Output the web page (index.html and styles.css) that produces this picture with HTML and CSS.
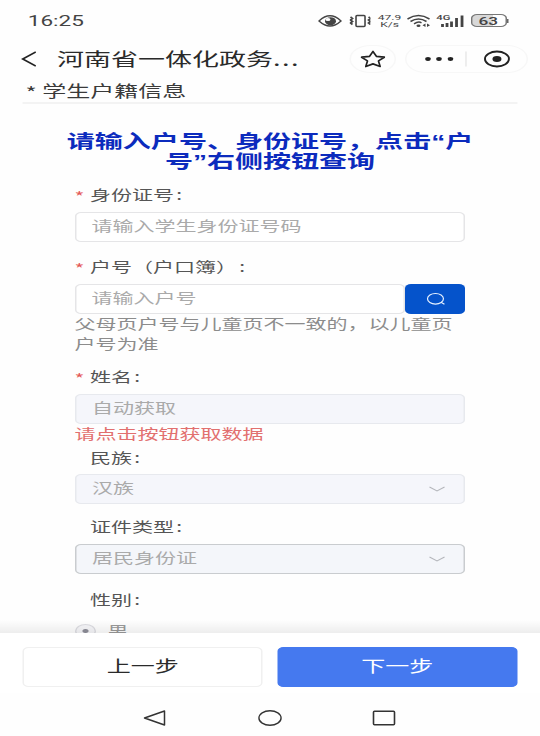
FILE: index.html
```html
<!DOCTYPE html>
<html lang="zh-CN">
<head>
<meta charset="utf-8">
<title>学生户籍信息</title>
<link rel="stylesheet" href="styles.css">
</head>
<body>
<div class="screen">
  <header class="status">
    <span class="clock">16:25</span>
    <svg class="i-eye" viewBox="0 0 24 14" preserveAspectRatio="none"><path d="M1 7Q12-3.500 23 7Q12 17 1 7Z" fill="none" stroke="#444" stroke-width="1.400"/><ellipse cx="12.500" cy="7.200" rx="5.500" ry="4" fill="#444"/><ellipse cx="10" cy="5.500" rx="2.500" ry="1.500" fill="#fff"/></svg>
    <svg class="i-vib" viewBox="0 0 22 14" preserveAspectRatio="none"><rect x="6.500" y="1.500" width="9" height="11" rx="1" fill="none" stroke="#444" stroke-width="1.600"/><path d="M1 3l2 1.500-2 1.500 2 1.500-2 1.500 2 1.500M19 3l2 1.500-2 1.500 2 1.500-2 1.500 2 1.500" fill="none" stroke="#444" stroke-width="1.700"/></svg>
    <span class="speed"><span>47.9</span><span>K/s</span></span>
    <svg class="i-wifi" viewBox="0 0 24 14" preserveAspectRatio="none"><path d="M1 5Q12-2 23 5M4 7.500Q12 2.500 20 7.500M7.500 9.800Q12 7 15 8.800" fill="none" stroke="#444" stroke-width="1.500"/><ellipse cx="12" cy="11.700" rx="2" ry="1.300" fill="#444"/><path d="M19 9.500v3.500l-3-1.700zM20.500 9.500v3.500l3-1.700z" fill="#444"/></svg>
    <span class="signal"><b>4G</b><svg viewBox="0 0 28 14" preserveAspectRatio="none"><path d="M6 10v3M10.500 9v4M15 7.500v5.500M20 4v9M25.500 1.500v11.500" stroke="#444" stroke-width="2.800" fill="none"/></svg></span>
    <span class="battery">63</span><i class="tip"></i>
  </header>
  <nav class="bar">
    <svg class="back" viewBox="0 0 16 16" preserveAspectRatio="none"><path d="M15 1L1.800 8l13.200 7" fill="none" stroke="#222" stroke-width="1.700"/></svg>
    <h1>河南省一体化政务<span class="dots">...</span></h1>
    <span class="fav"><svg viewBox="0 0 26 18" preserveAspectRatio="none"><path d="M13 1.500l3.400 4.800 8 .9-5.900 3.700 1.700 5.600-7.200-2.600-7.200 2.600 1.700-5.600-5.900-3.700 8-.9z" fill="none" stroke="#222" stroke-width="1.700" stroke-linejoin="round"/></svg></span>
    <span class="capsule"><svg viewBox="0 0 122 28" preserveAspectRatio="none"><g fill="#222"><ellipse cx="23" cy="14" rx="2.800" ry="1.900"/><ellipse cx="34" cy="14" rx="2.800" ry="1.900"/><ellipse cx="45.500" cy="14" rx="2.800" ry="1.900"/><ellipse cx="92" cy="14" rx="4.500" ry="3"/></g><path d="M61 6.500v15" stroke="#e8e8e8" stroke-width="1.500"/><ellipse cx="92" cy="14" rx="12" ry="7.500" fill="none" stroke="#222" stroke-width="1.900"/></svg></span>
  </nav>
  <h2 class="section"><span>*</span> 学生户籍信息</h2>
  <main class="form">
    <p class="notice">请输入户号、身份证号，点击<q>“</q>户<br>号<q>”</q>右侧按钮查询</p>
    <div class="label l1"><em>*</em>身份证号<i>:</i></div>
    <div class="input">请输入学生身份证号码</div>
    <div class="label l2"><em>*</em>户号（户口簿）<i>:</i></div>
    <div class="group"><div class="input">请输入户号</div><div class="search"><svg viewBox="0 0 20 14" preserveAspectRatio="none"><ellipse cx="9.500" cy="6.800" rx="8" ry="5.300" fill="none" stroke="#e8f2ff" stroke-width="1.200"/><path d="M15 10.300l3.500 2" stroke="#e8f2ff" stroke-width="1.200"/></svg></div></div>
    <p class="help">父母页户号与儿童页不一致的，以儿童页户号为准</p>
    <div class="label l3"><em>*</em>姓名<i>:</i></div>
    <div class="input off">自动获取</div>
    <p class="error">请点击按钮获取数据</p>
    <div class="label l4"><em></em>民族<i>:</i></div>
    <div class="input off">汉族<svg viewBox="0 0 16 6" preserveAspectRatio="none"><path d="M.5 1L8 5l7.500-4" fill="none" stroke="#b4b6bb" stroke-width="1.100"/></svg></div>
    <div class="label l5"><em></em>证件类型<i>:</i></div>
    <div class="input off focus">居民身份证<svg viewBox="0 0 16 6" preserveAspectRatio="none"><path d="M.5 1L8 5l7.500-4" fill="none" stroke="#b4b6bb" stroke-width="1.100"/></svg></div>
    <div class="label l6"><em></em>性别<i>:</i></div>
    <div class="radio"><span></span>男</div>
  </main>
  <footer class="actions"><div class="btn">上一步</div><div class="btn primary">下一步</div></footer>
  <div class="system">
    <svg viewBox="0 0 24 18" preserveAspectRatio="none"><path d="M2 9L22 2v14z" fill="none" stroke="#333" stroke-width="1.500" stroke-linejoin="round"/></svg>
    <svg viewBox="0 0 26 18" preserveAspectRatio="none"><ellipse cx="13" cy="9" rx="12" ry="7.300" fill="none" stroke="#333" stroke-width="1.500"/></svg>
    <svg viewBox="0 0 24 18" preserveAspectRatio="none"><rect x="1.500" y="2.300" width="21" height="13.400" rx="1" fill="none" stroke="#333" stroke-width="1.600"/></svg>
  </div>
</div>
</body>
</html>
```
FILE: styles.css
```css
* { box-sizing: border-box; }
html, body { margin: 0; overflow: hidden; background: #fefefe; }
.screen {
  width: 360px; height: 736px; overflow: hidden;
  display: flex; flex-direction: column;
  transform: scaleX(1.5); transform-origin: 0 0;
  font: 14px/20px "Noto Sans CJK SC", sans-serif; color: #444;
  background: #fefefe;
}
h1, h2, p { margin: 0; font-weight: 400; }
svg { display: block; flex: none; }
em, i { font-style: normal; }
.status { height: 40px; flex: none; display: flex; align-items: center; padding: 1px 0 0 18.500px; font-family: Roboto, sans-serif; }
.clock { width: 193px; font-size: 15px; }
.i-eye { width: 16px; height: 14px; margin-right: 5px; }
.i-vib { width: 14.700px; height: 14px; margin-right: 4px; }
.speed { width: 17px; margin-right: 3px; display: flex; flex-direction: column; align-items: center; font-size: 8px; line-height: 7px; }
.i-wifi { width: 16px; height: 14px; margin-right: 3.700px; }
.signal { width: 18.700px; height: 14px; margin-right: 4px; position: relative; }
.signal b { position: absolute; left: 0; top: 0; font-size: 7.500px; line-height: 7px; font-weight: 500; }
.signal svg { width: 18.700px; height: 14px; }
.battery { width: 24px; height: 13px; border: 1px solid #777; border-radius: 4px; background: linear-gradient(90deg, #d8d8d8 63%, #fff 63%); font-size: 11.500px; line-height: 12px; font-weight: 500; text-align: center; }
.tip { width: 1.300px; height: 4px; background: #666; margin-left: .5px; }
.bar { height: 38px; flex: none; display: flex; align-items: center; padding-left: 13.500px; color: #2a2a2a; }
.back { width: 10.500px; height: 16px; }
h1 { width: 195px; height: 26px; margin-left: 14px; font-size: 18px; line-height: 24px; white-space: nowrap; }
.dots { letter-spacing: 1px; }
.fav { width: 31px; height: 28px; border: 1px solid #f7f7f7; border-radius: 14px; display: grid; place-items: center; }
.fav svg { width: 17.300px; height: 18px; }
.capsule { margin-left: 5.500px; width: 82px; height: 28px; border: 1px solid #f7f7f7; border-radius: 14px; }
.capsule svg { width: 81.300px; height: 28px; margin: -1px; }
.section { height: 26px; flex: none; margin: 0 15px; padding-left: 2px; border-bottom: 2px solid #f3f3f3; font-size: 16px; line-height: 24px; color: #3a3a3a; }
.section span { display: inline-block; width: 7.500px; position: relative; top: 2px; }
.form { height: 528.500px; flex: none; overflow: hidden; padding: 26px 49.700px 0; position: relative; }
.form::after { content: ""; position: absolute; left: 0; right: 0; bottom: 0; height: 13px; background: linear-gradient(rgba(0,0,0,0), rgba(0,0,0,.065)); }
.notice { margin: 0 -10px; text-align: center; font-size: 18.700px; line-height: 20px; font-weight: 700; color: #0c2bbd; white-space: nowrap; }
.notice q { quotes: none; font-family: "Liberation Sans", sans-serif; line-height: 0; }
.label { height: 20px; display: flex; line-height: 16px; color: #555; }
.label em { width: 10.300px; padding-top: 2px; color: #e45a58; }
.label i { margin-left: 1.500px; }
.l1 { margin: 16px 0 6px; }
.l2 { margin: 16px 0 6px; }
.l3 { margin: 15px 0 6px; }
.l4 { margin: 6px 0 5px; }
.l5 { margin: 13.500px 0 6px; }
.l6 { margin: 17.500px 0 9.500px; }
.input { height: 30px; flex: 1; border: 1px solid #e5e5e7; border-radius: 4px; padding: 0 12.300px 0 10.300px; line-height: 24px; color: #aaa; background: #fff; display: flex; justify-content: space-between; align-items: flex-start; }
.off { background: #f5f6fb; border-color: #e7e9ee; padding-left: 10.700px; }
.focus { background: #f4f6fa; border-color: #c9cccf; }
.input svg { width: 10.700px; height: 6px; margin-top: 11px; }
.group { display: flex; }
.search { width: 40px; height: 30px; border-radius: 4px; background: #0553cb; display: grid; place-items: center; }
.search svg { width: 13.300px; height: 14px; }
.help { color: #8c8c8c; margin-top: -1px; }
.error { color: #e2706f; margin-top: -1px; }
.radio { height: 20px; display: flex; align-items: center; line-height: 17px; color: #999; }
.radio span { width: 14px; height: 14px; margin-right: 8px; border: 1px solid #dddde2; border-radius: 50%; background: radial-gradient(circle, #8e8e99 1.500px, #f6f6f9 2.500px); }
.actions { height: 60px; flex: none; padding: 14px 15.300px 0; display: flex; gap: 10px; background: #fff; }
.btn { flex: 1; height: 40.500px; border: 1px solid #f0f0f0; border-radius: 4px; text-align: center; font-size: 16px; line-height: 35px; color: #2a2a2a; }
.primary { background: #4579ef; border-color: #4579ef; color: #fff; }
.system { flex: 1; display: flex; justify-content: space-between; align-items: center; padding: 8px 96px 0 95px; }
.system svg { width: 16px; height: 18px; }
```
